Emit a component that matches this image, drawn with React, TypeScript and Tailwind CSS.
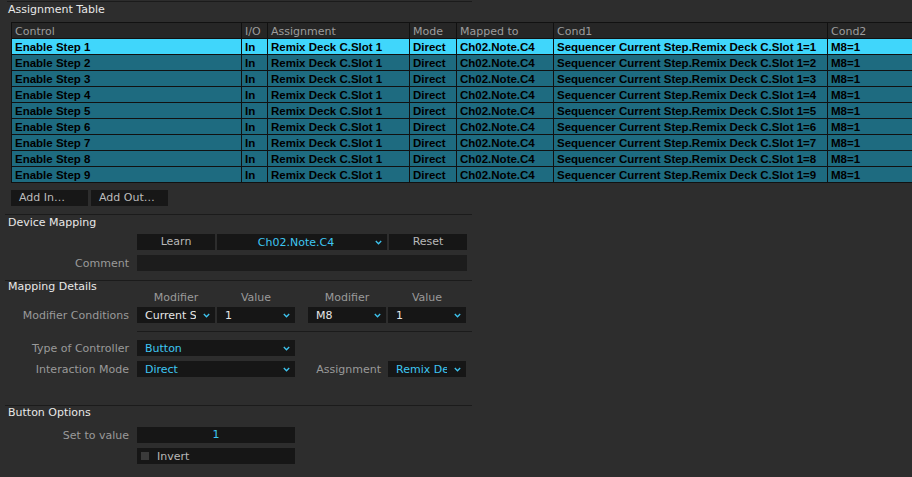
import React from 'react';

const rows = [1, 2, 3, 4, 5, 6, 7, 8, 9];
const cols = 'grid grid-cols-[229px_25px_141px_46px_96px_273px_120px] gap-px';

function Chevron() {
    return (
        <svg width="7" height="5" viewBox="0 0 7 5" className="shrink-0">
            <polyline points="0.8,1 3.5,3.8 6.2,1" fill="none" stroke="#3ec4ef" strokeWidth="1.3" />
        </svg>
    );
}

function Select({ value, w, cyan, clip }: { value: string; w: string; cyan?: boolean; clip?: string }) {
    return (
        <div className={`${w} h-[16px] bg-[#161616] flex items-center pl-[8px] pr-[5px] shrink-0`}>
            <span className={`${clip ?? 'flex-1'} overflow-hidden whitespace-nowrap ${cyan ? 'text-[#3ec6f2]' : 'text-[#e6e6e6]'}`}>{value}</span>
            <span className="flex-1" />
            <Chevron />
        </div>
    );
}

function Label({ children }: { children: React.ReactNode }) {
    return <div className="w-[129px] shrink-0 text-right text-[#9a9a9a] mr-[8px]">{children}</div>;
}

function Separator() {
    return <div className="ml-[5px] w-[467px] h-px bg-[#1b1b1b]" />;
}

export default function App() {
    return (
        <div className="w-[912px] h-[477px] overflow-hidden bg-[#2d2d2d] text-[11px] leading-[15px]" style={{ fontFamily: '"DejaVu Sans", sans-serif' }}>
            <div className="h-px" />
            <div className="ml-[7px] w-[465px] h-px bg-[#1b1b1b]" />
            <div className="h-[14px] leading-[15px] pl-[8px] text-[#e8e8e8]">Assignment Table</div>

            {/* assignment table */}
            <div className="mt-[6px] ml-[11px] w-[960px] p-px bg-[#111] flex flex-col gap-px">
                <div className={`${cols} bg-[#111]`}>
                    {['Control', 'I/O', 'Assignment', 'Mode', 'Mapped to', 'Cond1', 'Cond2'].map((h) => (
                        <div key={h} className="h-[15px] leading-[17px] bg-[#262626] pl-[3px] text-[#9c9c9c] whitespace-nowrap overflow-hidden">{h}</div>
                    ))}
                </div>
                {rows.map((n) => {
                    const bg = n === 1 ? 'bg-[#40d6fb]' : 'bg-[#1e6b80]';
                    const cells = [`Enable Step ${n}`, 'In', 'Remix Deck C.Slot 1', 'Direct', 'Ch02.Note.C4', `Sequencer Current Step.Remix Deck C.Slot 1=${n}`, 'M8=1'];
                    return (
                        <div key={n} className={cols}>
                            {cells.map((c, i) => (
                                <div key={i} className={`h-[15px] leading-[17px] ${bg} pl-[3px] text-black font-bold whitespace-nowrap overflow-hidden text-[11.5px]`} style={{ fontFamily: '"Liberation Sans", Arial, sans-serif' }}>{c}</div>
                            ))}
                        </div>
                    );
                })}
            </div>

            <div className="mt-[7px] ml-[11px] flex gap-[3px]">
                <div className="w-[77px] h-[16px] leading-[16px] bg-[#171717] pl-[8px] text-[#bcbcbc]">Add In…</div>
                <div className="w-[77px] h-[16px] leading-[16px] bg-[#171717] pl-[8px] text-[#bcbcbc]">Add Out…</div>
            </div>

            <div className="mt-[8px]"><Separator /></div>
            <div className="h-[15px] leading-[15px] pl-[8px] text-[#e8e8e8]">Device Mapping</div>
            <div className="mt-[4px] flex items-center h-[16px]">
                <div className="w-[137px]" />
                <div className="w-[78px] h-[16px] leading-[16px] bg-[#161616] text-center text-[#b8b8b8]">Learn</div>
                <div className="ml-[2px] w-[170px] h-[16px] bg-[#161616] flex items-center pr-[5px]">
                    <span className="flex-1 text-center text-[#3ec6f2]">Ch02.Note.C4</span>
                    <Chevron />
                </div>
                <div className="ml-[2px] w-[78px] h-[16px] leading-[16px] bg-[#161616] text-center text-[#b8b8b8]">Reset</div>
            </div>
            <div className="mt-[5px] flex items-center h-[16px]">
                <Label>Comment</Label>
                <div className="w-[330px] h-[16px] bg-[#1c1c1c]" />
            </div>

            <div className="mt-[9px]"><Separator /></div>
            <div className="mt-px h-[10px] leading-[10px] pl-[8px] text-[#e8e8e8]">Mapping Details</div>
            <div className="flex h-[11px] leading-[11px] text-[#9a9a9a]">
                <div className="w-[137px]" />
                <div className="w-[78px] text-center">Modifier</div>
                <div className="ml-[2px] w-[78px] text-center">Value</div>
                <div className="ml-[13px] w-[78px] text-center">Modifier</div>
                <div className="ml-[2px] w-[78px] text-center">Value</div>
            </div>
            <div className="mt-[4px] flex items-center h-[16px]">
                <Label>Modifier Conditions</Label>
                <Select value="Current Step" w="w-[78px]" clip="w-[51px] shrink-0" />
                <div className="ml-[2px]"><Select value="1" w="w-[78px]" /></div>
                <div className="ml-[13px]"><Select value="M8" w="w-[78px]" /></div>
                <div className="ml-[2px]"><Select value="1" w="w-[78px]" /></div>
            </div>
            <div className="mt-[8px] ml-[137px] w-[335px] h-px bg-[#1b1b1b]" />
            <div className="mt-[8px] flex items-center h-[16px]">
                <Label>Type of Controller</Label>
                <Select value="Button" w="w-[158px]" cyan />
            </div>
            <div className="mt-[5px] flex items-center h-[16px]">
                <Label>Interaction Mode</Label>
                <Select value="Direct" w="w-[158px]" cyan />
                <div className="w-[86px] text-right text-[#9a9a9a]">Assignment</div>
                <div className="ml-[7px]"><Select value="Remix Deck C.Slot 1" w="w-[78px]" cyan clip="w-[51px] shrink-0" /></div>
            </div>

            <div className="mt-[28px]"><Separator /></div>
            <div className="h-[14px] leading-[14px] pl-[8px] text-[#e8e8e8]">Button Options</div>
            <div className="mt-[7px] flex items-center h-[16px]">
                <Label>Set to value</Label>
                <div className="w-[158px] h-[16px] leading-[16px] bg-[#161616] text-center text-[#3ec6f2]">1</div>
            </div>
            <div className="mt-[5px] flex items-center h-[16px]">
                <div className="w-[137px]" />
                <div className="w-[158px] h-[16px] bg-[#161616] flex items-center pl-[4px]">
                    <div className="w-[8px] h-[8px] bg-[#3a3a3a]" />
                    <span className="ml-[8px] text-[#b8b8b8]">Invert</span>
                </div>
            </div>
        </div>
    );
}
